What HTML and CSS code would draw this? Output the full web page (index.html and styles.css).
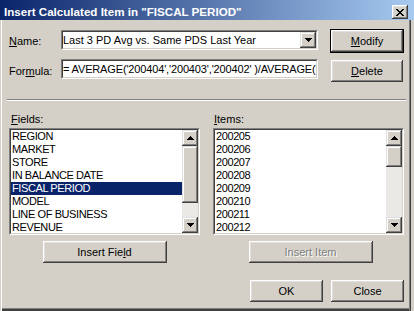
FILE: index.html
```html
<!DOCTYPE html>
<html lang="en">

<head>
    <meta charset="UTF-8">
    <meta name="viewport" content="width=device-width, initial-scale=1.0">
    <title>Insert Calculated Item</title>
    <link rel="stylesheet" href="styles.css">
</head>

<body>
    <div class="dialog">
        <div class="titlebar">
            <span class="title">Insert Calculated Item in "FISCAL PERIOD"</span>
            <span class="close-box">
                <svg width="8" height="7" viewBox="0 0 8 7">
                    <path d="M0 0h2v1h1v1h2V1h1V0h2v1H7v1H6v1H5v1h1v1h1v1h1v1H6V6H5V5H3v1H2v1H0V6h1V5h1V4h1V3H2V2H1V1H0z" fill="#000" />
                </svg>
            </span>
        </div>

        <div class="frame">
            <div class="top-grid">
                <label class="lbl"><u>N</u>ame:</label>
                <div class="sunken combo">
                    <div class="sunken-inner field">
                        <span class="field-text">Last 3 PD Avg vs. Same PDS Last Year</span>
                        <span class="raised drop-btn">
                            <svg width="7" height="4" viewBox="0 0 7 4"><path d="M0 0h7v1H6v1H5v1H4v1H3V3H2V2H1V1H0z" /></svg>
                        </span>
                    </div>
                </div>
                <div class="btn-cell"><button class="btn default"><u>M</u>odify</button></div>

                <label class="lbl">For<u>m</u>ula:</label>
                <div class="sunken formula">
                    <div class="sunken-inner field">
                        <span class="field-text formula-text">= AVERAGE('200404','200403','200402' )/AVERAGE(</span>
                    </div>
                </div>
                <div class="btn-cell"><button class="btn small"><u>D</u>elete</button></div>
            </div>

            <div class="separator"></div>

            <div class="lists">
                <div class="list-col">
                    <label class="list-lbl"><u>F</u>ields:</label>
                    <div class="sunken listbox">
                        <div class="sunken-inner list-body">
                            <div class="rows">
                                <div class="row">REGION</div>
                                <div class="row">MARKET</div>
                                <div class="row">STORE</div>
                                <div class="row">IN BALANCE DATE</div>
                                <div class="row selected">FISCAL PERIOD</div>
                                <div class="row">MODEL</div>
                                <div class="row">LINE OF BUSINESS</div>
                                <div class="row">REVENUE</div>
                            </div>
                            <div class="scroll">
                                <span class="raised sb-btn">
                                    <svg width="7" height="4" viewBox="0 0 7 4"><path d="M3 0h1v1h1v1h1v1h1v1H0V3h1V2h1V1h1z" /></svg>
                                </span>
                                <span class="raised sb-thumb" style="height: 57px;"></span>
                                <span class="sb-track"></span>
                                <span class="raised sb-btn">
                                    <svg width="7" height="4" viewBox="0 0 7 4"><path d="M0 0h7v1H6v1H5v1H4v1H3V3H2V2H1V1H0z" /></svg>
                                </span>
                            </div>
                        </div>
                    </div>
                    <button class="btn wide">Insert Fie<u>l</u>d</button>
                </div>

                <div class="list-col">
                    <label class="list-lbl items-lbl"><u>I</u>tems:</label>
                    <div class="sunken listbox">
                        <div class="sunken-inner list-body">
                            <div class="rows">
                                <div class="row">200205</div>
                                <div class="row">200206</div>
                                <div class="row">200207</div>
                                <div class="row">200208</div>
                                <div class="row">200209</div>
                                <div class="row">200210</div>
                                <div class="row">200211</div>
                                <div class="row">200212</div>
                            </div>
                            <div class="scroll">
                                <span class="raised sb-btn">
                                    <svg width="7" height="4" viewBox="0 0 7 4"><path d="M3 0h1v1h1v1h1v1h1v1H0V3h1V2h1V1h1z" /></svg>
                                </span>
                                <span class="raised sb-thumb" style="height: 21px;"></span>
                                <span class="sb-track"></span>
                                <span class="raised sb-btn">
                                    <svg width="7" height="4" viewBox="0 0 7 4"><path d="M0 0h7v1H6v1H5v1H4v1H3V3H2V2H1V1H0z" /></svg>
                                </span>
                            </div>
                        </div>
                    </div>
                    <button class="btn wide item-btn" disabled>Insert Item</button>
                </div>
            </div>

            <div class="footer">
                <button class="btn small">OK</button>
                <button class="btn small">Close</button>
            </div>
        </div>
    </div>
</body>

</html>
```

FILE: styles.css
```css
* {
    margin: 0;
    padding: 0;
    box-sizing: border-box;
}

body {
    width: 414px;
    height: 311px;
    overflow: hidden;
    background-color: #d4d0c8;
    font-family: "Liberation Sans", Arial, sans-serif;
    font-size: 11px;
    color: #000;
}

.dialog {
    width: 414px;
    height: 311px;
}

/* title bar */

.titlebar {
    display: flex;
    justify-content: space-between;
    align-items: flex-start;
    height: 20px;
    padding: 0 6px 0 4px;
    background: linear-gradient(to right, #0a246a, #a6caf0);
}

.title {
    padding-top: 5px;
    line-height: 14px;
    font-size: 11.6px;
    font-weight: bold;
    color: #fff;
    white-space: nowrap;
}

.close-box {
    display: flex;
    align-items: center;
    justify-content: center;
    width: 16px;
    height: 14px;
    margin-top: 5px;
    background-color: #d4d0c8;
    box-shadow: inset -1px -1px #404040, inset 1px 1px #fff, inset -2px -2px #808080, inset 2px 2px #dfdfdf;
}

/* window body */

.frame {
    width: 411px;
    height: 291px;
    padding: 9px 7px 0 9px;
    box-shadow: inset 1px 0 #d4d0c8, inset 2px 0 #fff,
        inset -1px 0 #404040, inset -2px 0 #808080,
        inset 0 -2px #404040, inset 0 -3px #808080;
}

.top-grid {
    display: grid;
    grid-template-columns: 52px 257px 1fr;
    grid-template-rows: 24px 24px;
    row-gap: 6px;
}

.lbl {
    align-self: center;
    line-height: 13px;
    white-space: nowrap;
}

.sunken {
    border: 1px solid;
    border-color: #808080 #fff #fff #808080;
}

.sunken-inner {
    height: 100%;
    border: 1px solid;
    border-color: #404040 #d4d0c8 #d4d0c8 #404040;
    background-color: #fff;
}

.combo,
.formula {
    height: 20px;
}

.combo {
    margin-top: 1px;
}

.field {
    display: flex;
    align-items: center;
    overflow: hidden;
}

.field-text {
    flex: 1;
    overflow: hidden;
    white-space: nowrap;
    line-height: 13px;
}

.formula-text {
    letter-spacing: -0.15px;
}

.raised {
    display: flex;
    align-items: center;
    justify-content: center;
    background-color: #d4d0c8;
    box-shadow: inset -1px -1px #404040, inset 1px 1px #dfdfdf, inset -2px -2px #808080, inset 2px 2px #fff;
}

.drop-btn {
    width: 16px;
    height: 16px;
    flex-shrink: 0;
}

.drop-btn svg,
.sb-btn svg {
    fill: #000;
}

/* buttons */

.btn-cell {
    display: flex;
    justify-content: flex-end;
}

.btn {
    font-family: inherit;
    font-size: 11px;
    color: #000;
    border: none;
    background-color: #d4d0c8;
    box-shadow: inset -1px -1px #404040, inset 1px 1px #fff, inset -2px -2px #808080, inset 2px 2px #dfdfdf;
}

.btn.default {
    width: 74px;
    height: 24px;
    border: 1px solid #000;
}

.btn.small {
    width: 73px;
    height: 22px;
}

.btn-cell .btn.small {
    width: 72px;
    margin: 1px;
}

.btn.wide {
    width: 124px;
    height: 22px;
    margin-top: 6px;
    align-self: center;
}

.btn:disabled {
    color: #808080;
    text-shadow: 1px 1px 0 #fff;
}

.item-btn {
    position: relative;
    left: 2px;
}

.separator {
    margin: 16px -2px 0 -2px;
    border-top: 1px solid #808080;
    border-bottom: 1px solid #fff;
}

/* field and item lists */

.lists {
    display: grid;
    grid-template-columns: 191px 191px;
    column-gap: 13px;
    margin-top: 12px;
}

.list-col {
    display: flex;
    flex-direction: column;
}

.list-lbl {
    line-height: 13px;
    padding-left: 2px;
    margin-bottom: 2px;
}

.items-lbl {
    padding-left: 1px;
}

.listbox {
    height: 107px;
}

.list-body {
    display: flex;
    overflow: hidden;
}

.rows {
    flex: 1;
    overflow: hidden;
}

.row {
    height: 13px;
    line-height: 13px;
    padding-left: 1px;
    white-space: nowrap;
    letter-spacing: -0.4px;
}

.row.selected {
    background-color: #0a246a;
    color: #fff;
}

.scroll {
    display: flex;
    flex-direction: column;
    width: 16px;
}

.sb-btn {
    height: 16px;
    flex-shrink: 0;
}

.sb-thumb {
    flex-shrink: 0;
}

.sb-track {
    flex: 1;
    background-color: #ebe9e5;
}

.footer {
    display: flex;
    justify-content: flex-end;
    gap: 8px;
    margin-top: 17px;
}
```
